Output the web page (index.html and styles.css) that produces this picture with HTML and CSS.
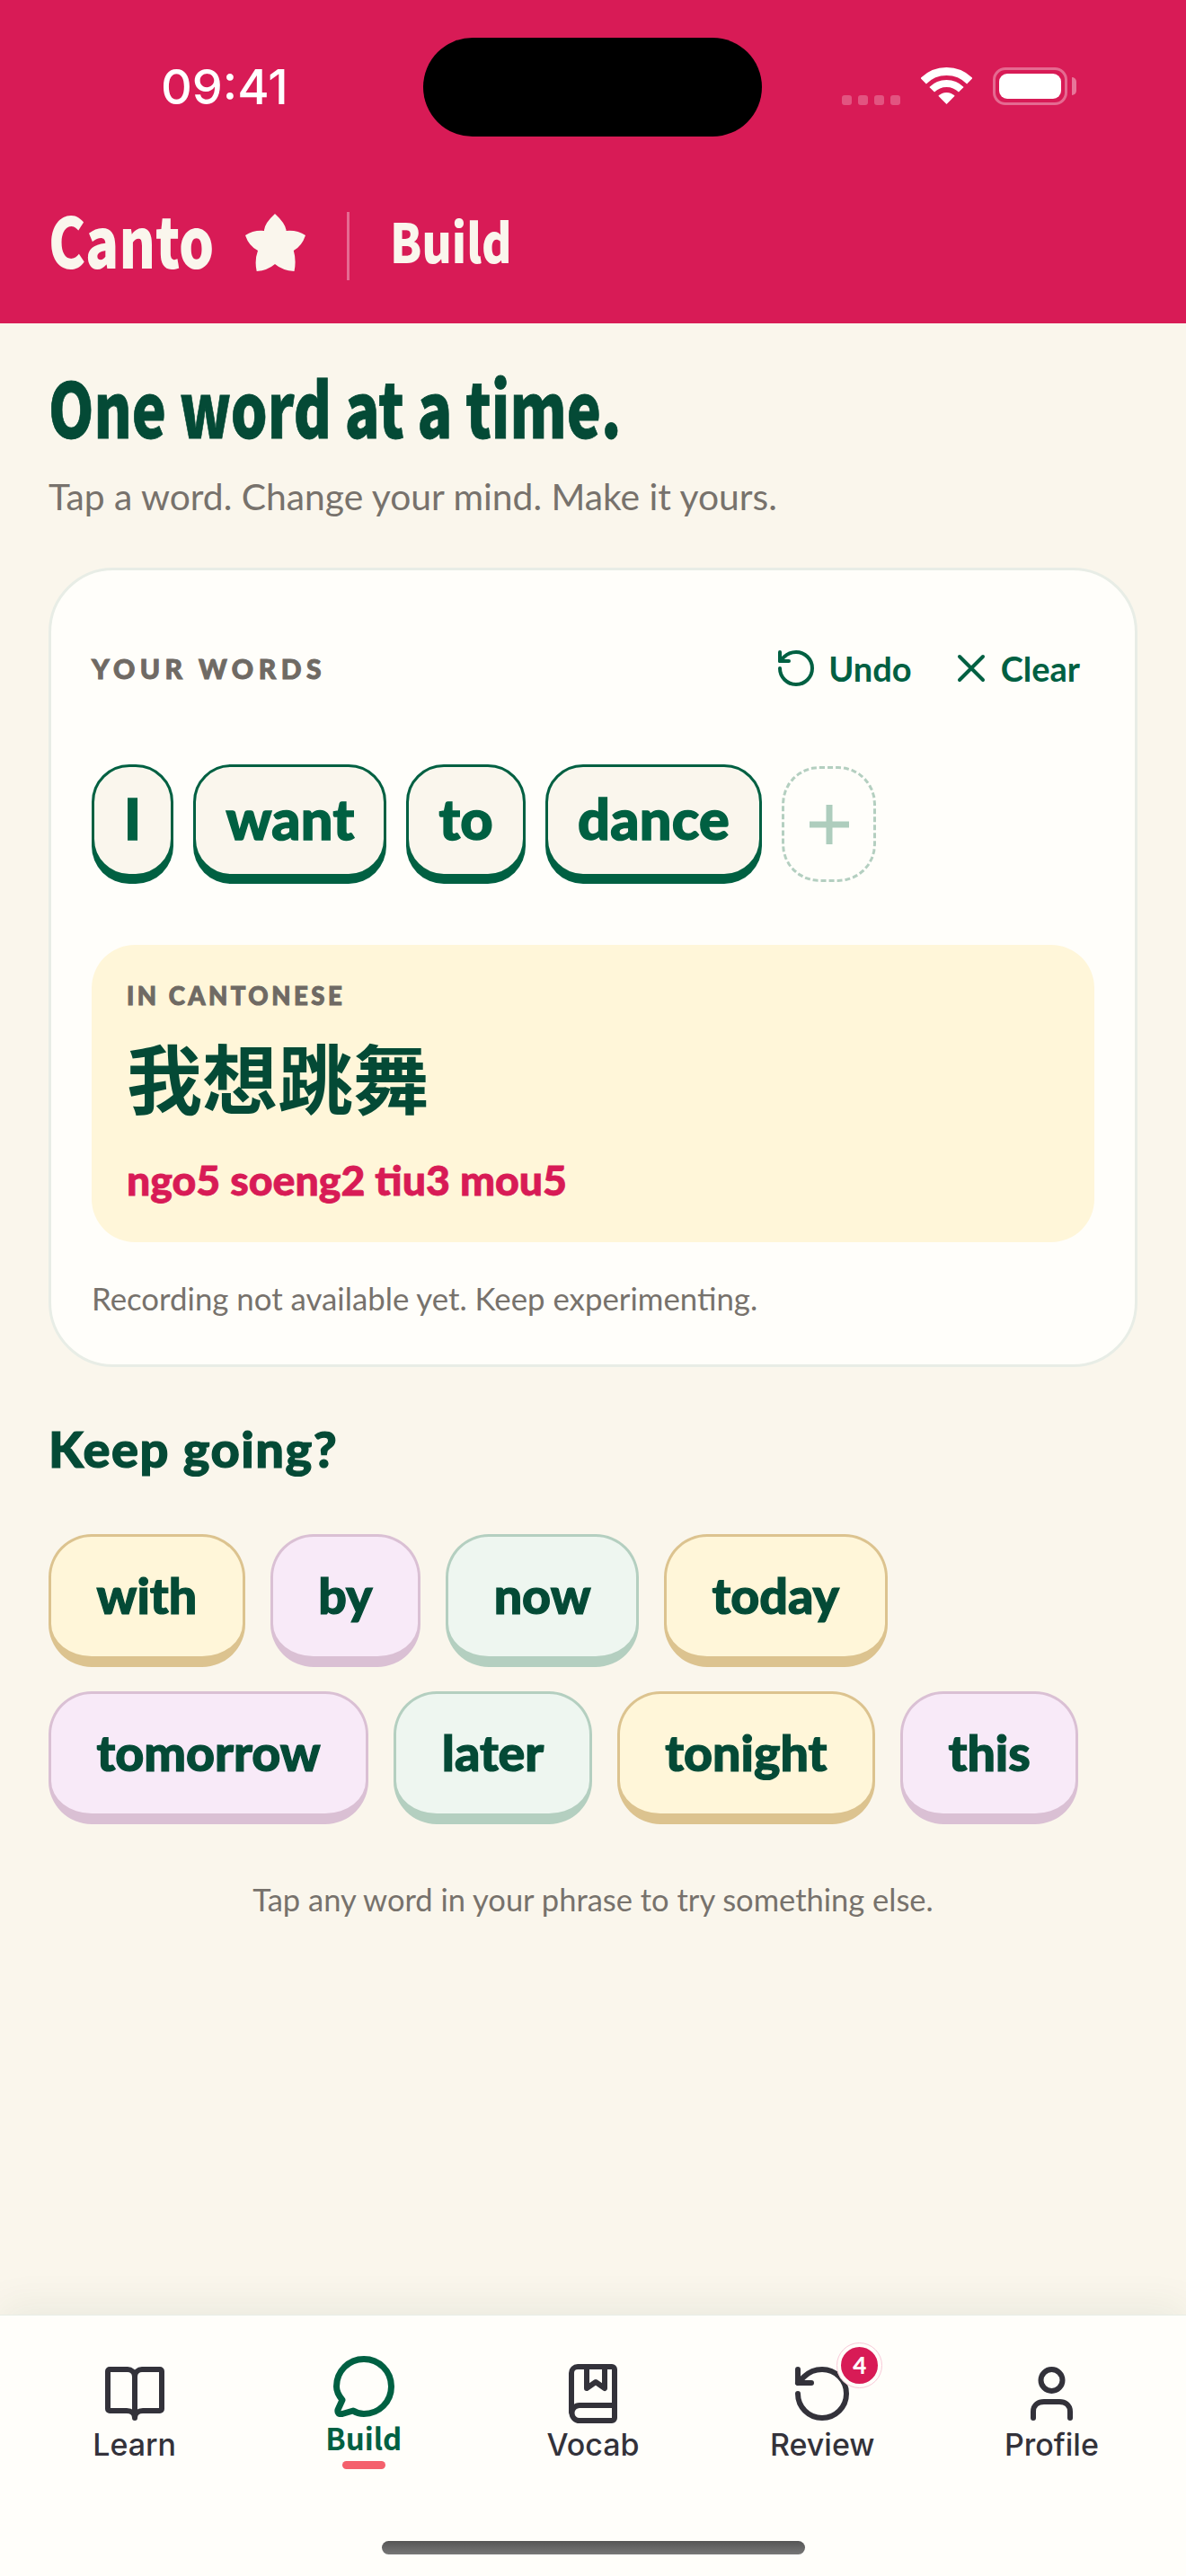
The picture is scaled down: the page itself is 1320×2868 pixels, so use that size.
FILE: index.html
```html
<!DOCTYPE html>
<html lang="en">
<head>
    <meta charset="UTF-8">
    <meta name="viewport" content="width=device-width, initial-scale=1.0">
    <title>Canto - Build</title>
    <link rel="stylesheet" href="styles.css">
</head>
<body>
    <header class="top">
        <div class="status">
            <span class="time">09:41</span>
            <div class="island"></div>
            <div class="status-icons">
                <div class="signal"><i></i><i></i><i></i><i></i></div>
                <svg class="wifi" width="57" height="42" viewBox="0 0 57 42" fill="none" stroke="#fff">
                    <path d="M2.7 15.2a36.5 36.5 0 0 1 51.6 0" stroke-width="9"/>
                    <path d="M12.2 24.7a23 23 0 0 1 32.6 0" stroke-width="8"/>
                    <path d="M28.5 41L19.3 31.8a13 13 0 0 1 18.4 0Z" fill="#fff" stroke="none"/>
                </svg>
                <div class="battery"><div class="battery-fill"></div></div>
                <div class="battery-nub"></div>
            </div>
        </div>
        <div class="brand">
            <span class="brand-name"><span class="squeeze">Canto</span></span>
            <svg class="star" width="67" height="64" viewBox="0 0 67 64">
                <path d="M33 0Q45 11 45.6 19Q58 18 67 24Q63 36 53.8 41Q57 52 54.5 64Q41 63 33 56Q25 63 12.7 64Q10 52 14 41Q4 36 0 24Q9 18 21 19Q21 11 33 0Z" fill="#faf6ed"/>
            </svg>
            <span class="brand-line"></span>
            <span class="brand-page"><span class="squeeze">Build</span></span>
        </div>
    </header>

    <main class="content">
        <h1><span class="squeeze">One word at a time.</span></h1>
        <p class="sub">Tap a word. Change your mind. Make it yours.</p>

        <section class="card">
            <div class="card-head">
                <span class="eyebrow">YOUR WORDS</span>
                <div class="actions">
                    <button class="action">
                        <svg width="48" height="48" viewBox="0 0 24 24" fill="none" stroke="#006042" stroke-width="2" stroke-linecap="round" stroke-linejoin="round">
                            <path d="M3 12a9 9 0 1 0 9-9 9.75 9.75 0 0 0-6.74 2.74L3 8"/>
                            <path d="M3 3v5h5"/>
                        </svg>
                        Undo
                    </button>
                    <button class="action action-clear">
                        <svg width="32" height="32" viewBox="0 0 32 32" fill="none" stroke="#006042" stroke-width="4" stroke-linecap="round">
                            <path d="M3 3L29 29M29 3L3 29"/>
                        </svg>
                        Clear
                    </button>
                </div>
            </div>

            <div class="phrase">
                <span class="word">I</span>
                <span class="word">want</span>
                <span class="word">to</span>
                <span class="word">dance</span>
                <span class="word-add">
                    <svg width="44" height="44" viewBox="0 0 44 44" stroke="#aecdbd" stroke-width="7">
                        <path d="M22 0V44M0 22H44"/>
                    </svg>
                </span>
            </div>

            <div class="answer">
                <span class="eyebrow eyebrow-small">IN CANTONESE</span>
                <div class="hanzi" lang="zh-Hant">我想跳舞</div>
                <div class="jyutping">ngo5 soeng2 tiu3 mou5</div>
            </div>

            <p class="note">Recording not available yet. Keep experimenting.</p>
        </section>

        <h2>Keep going?</h2>
        <div class="options">
            <span class="option yellow">with</span>
            <span class="option pink">by</span>
            <span class="option green">now</span>
            <span class="option yellow">today</span>
            <span class="option pink">tomorrow</span>
            <span class="option green">later</span>
            <span class="option yellow">tonight</span>
            <span class="option pink">this</span>
        </div>
        <p class="hint">Tap any word in your phrase to try something else.</p>
    </main>

    <nav class="tabs">
        <a class="tab">
            <span class="tab-icon">
                <svg width="66" height="60" viewBox="0 0 66 60" fill="none" stroke="#33323a" stroke-width="6" stroke-linecap="round" stroke-linejoin="round">
                    <path d="M33 11C33 6 29 3 25 3H5a2 2 0 0 0-2 2V47a2 2 0 0 0 2 2H24C29 49 33 52 33 57C33 52 37 49 42 49H61a2 2 0 0 0 2-2V5a2 2 0 0 0-2-2H41C37 3 33 6 33 11V57"/>
                </svg>
            </span>
            Learn
        </a>
        <a class="tab tab-active">
            <span class="tab-icon">
                <svg width="68" height="68" viewBox="0 0 68 68" fill="none" stroke="#006042" stroke-width="7" stroke-linejoin="round">
                    <path d="M10 49C5 43 3.5 38 3.5 34C3.5 17 17 3.5 34 3.5S64.5 17 64.5 34S51 64.5 34 64.5C29 64.5 25 63 22 61L10 64.5Q4 65.5 5 60Z"/>
                </svg>
            </span>
            Build
            <span class="tab-mark"></span>
        </a>
        <a class="tab">
            <span class="tab-icon">
                <svg width="54" height="66" viewBox="0 0 54 66" fill="none" stroke="#33323a" stroke-width="6" stroke-linecap="round" stroke-linejoin="round">
                    <path d="M3 54V10a7 7 0 0 1 7-7H48a3 3 0 0 1 3 3V60a3 3 0 0 1-3 3H12a8.500 8.500 0 0 1 0-17H51"/>
                    <path d="M20 3V27L30 20L40 27V3"/>
                </svg>
            </span>
            Vocab
        </a>
        <a class="tab">
            <span class="tab-icon">
                <svg width="72" height="72" viewBox="0 0 24 24" fill="none" stroke="#33323a" stroke-width="2" stroke-linecap="round" stroke-linejoin="round">
                    <path d="M3 12a9 9 0 1 0 9-9 9.75 9.75 0 0 0-6.74 2.74L3 8"/>
                    <path d="M3 3v5h5"/>
                </svg>
                <span class="badge">4</span>
            </span>
            Review
        </a>
        <a class="tab">
            <span class="tab-icon">
                <svg width="47" height="60" viewBox="0 0 47 60" fill="none" stroke="#33323a" stroke-width="6" stroke-linecap="round">
                    <circle cx="23.500" cy="15" r="12"/>
                    <path d="M3 57V50C3 42 9 39 15 39H32C38 39 44 42 44 50V57"/>
                </svg>
            </span>
            Profile
        </a>
        <div class="home-bar"></div>
    </nav>
</body>
</html>
```

FILE: styles.css
```css
* {
    box-sizing: border-box;
}
body {
    margin: 0;
    height: 2868px;
    display: flex;
    flex-direction: column;
    background-color: #faf6ec;
    font-family: Lato, sans-serif;
    overflow: hidden;
}

/* condensed look for the display face */
.squeeze {
    display: inline-block;
    white-space: nowrap;
    transform-origin: left center;
}

/* header */
.top {
    height: 360px;
    background-color: #d81b56;
    flex-shrink: 0;
}
.status {
    position: relative;
    height: 196px;
    display: flex;
    justify-content: space-between;
    padding: 66px 0 0 179px;
}
.time {
    font-family: Inter, sans-serif;
    font-size: 54px;
    font-weight: 500;
    line-height: 62px;
    color: #fff;
}
.island {
    position: absolute;
    left: 471px;
    top: 42px;
    width: 377px;
    height: 110px;
    border-radius: 55px;
    background-color: #000;
}
.status-icons {
    display: flex;
    align-items: flex-end;
    height: 42px;
    margin-top: 9px;
    padding-right: 122px;
}
.signal {
    display: flex;
    gap: 7px;
    margin-right: 23px;
}
.signal i {
    width: 11px;
    height: 11px;
    border-radius: 3px;
    background-color: rgba(255, 255, 255, 0.25);
}
.wifi {
    display: block;
    margin-right: 23px;
}
.battery {
    width: 83px;
    height: 42px;
    padding: 4px;
    border: 3px solid rgba(255, 255, 255, 0.35);
    border-radius: 14px;
}
.battery-fill {
    height: 100%;
    background-color: #fff;
    border-radius: 9px;
}
.battery-nub {
    width: 5px;
    height: 20px;
    margin: 0 0 11px 5px;
    background-color: rgba(255, 255, 255, 0.4);
    border-radius: 0 5px 5px 0;
}
.brand {
    display: flex;
    align-items: center;
    padding-left: 54px;
    height: 76px;
    margin-top: 40px;
    color: #faf6ed;
    font-family: "Noto Sans CJK TC", "Noto Sans", sans-serif;
    font-weight: 900;
}
.brand-name {
    width: 184px;
    font-size: 78px;
    line-height: 76px;
    margin-top: -18px;
}
.brand-name .squeeze {
    transform: scaleX(0.79);
}
.star {
    margin: -8px 0 0 35px;
}
.brand-line {
    width: 3px;
    height: 76px;
    margin: 0 45px 0 46px;
    background-color: rgba(255, 255, 255, 0.35);
}
.brand-page {
    width: 134px;
    font-size: 60px;
    line-height: 76px;
    margin-top: -14px;
}
.brand-page .squeeze {
    transform: scaleX(0.85);
}

/* main column */
.content {
    flex: 1;
    padding: 42px 54px 0;
}
h1 {
    margin: 0;
    font-family: "Noto Sans CJK TC", "Noto Sans", sans-serif;
    font-size: 84px;
    font-weight: 900;
    line-height: 100px;
    color: #044a36;
    -webkit-text-stroke: 0.8px #044a36;
}
h1 .squeeze {
    transform: scaleX(0.765);
}
.sub {
    margin: 23px 0 0;
    font-size: 40.800px;
    line-height: 56px;
    color: #77726c;
}
.card {
    margin-top: 51px;
    height: 890px;
    padding: 85px 45px 0;
    background-color: #fffefa;
    border: 3px solid #e8ede6;
    border-radius: 72px;
}
.card-head {
    display: flex;
    justify-content: space-between;
    align-items: center;
    height: 48px;
}
.eyebrow {
    font-size: 30px;
    font-weight: 900;
    letter-spacing: 5.500px;
    color: #6f6a64;
    -webkit-text-stroke: 1px #6f6a64;
}
.eyebrow-small {
    display: block;
    font-size: 27.500px;
    line-height: 32px;
    letter-spacing: 3.500px;
}
.actions {
    display: flex;
    gap: 50px;
    padding-right: 16px;
}
.action {
    display: flex;
    align-items: center;
    gap: 12px;
    padding: 0;
    border: none;
    background: none;
    font-family: Lato, sans-serif;
    font-size: 38px;
    font-weight: 700;
    color: #006042;
}
.action-clear {
    gap: 17px;
}
.phrase {
    display: flex;
    gap: 22px;
    margin-top: 83px;
}
.word {
    height: 125px;
    padding: 0 33px;
    border: 3px solid #006042;
    border-radius: 42px;
    background-color: #faf6ed;
    box-shadow: 0 8px 0 #006042;
    font-size: 63px;
    font-weight: 900;
    line-height: 114px;
    letter-spacing: 0.300px;
    color: #006042;
    -webkit-text-stroke: 1.500px #006042;
}
.word-add {
    display: flex;
    align-items: center;
    justify-content: center;
    width: 105px;
    height: 129px;
    margin-top: 2px;
    border: 3px dashed #b4cfc0;
    border-radius: 42px;
}
.answer {
    height: 331px;
    margin-top: 70px;
    padding: 41px 39px 0;
    background-color: #fff6d9;
    border-radius: 48px;
}
.hanzi {
    margin-top: 13px;
    font-family: "Noto Sans CJK TC", sans-serif;
    font-size: 84px;
    font-weight: 700;
    line-height: 120px;
    color: #044a36;
}
.jyutping {
    margin-top: 27px;
    font-size: 46.400px;
    font-weight: 900;
    line-height: 56px;
    color: #d81b56;
    -webkit-text-stroke: 0.8px #d81b56;
}
.note {
    margin: 40px 0 0;
    font-size: 34.800px;
    line-height: 46px;
    color: #77726c;
}
h2 {
    margin: 59px 0 0;
    font-size: 56px;
    font-weight: 900;
    line-height: 64px;
    letter-spacing: 1.500px;
    color: #044a36;
    -webkit-text-stroke: 1.200px #044a36;
}
.options {
    display: flex;
    flex-wrap: wrap;
    gap: 27px 28px;
    margin-top: 63px;
}
.option {
    height: 148px;
    padding: 0 50.500px;
    border: 3px solid;
    border-bottom-width: 12px;
    border-radius: 48px;
    font-size: 55.500px;
    font-weight: 900;
    line-height: 130px;
    color: #044a36;
    -webkit-text-stroke: 1.200px #044a36;
}
.yellow {
    background-color: #fff6d9;
    border-color: #dcc38f;
}
.pink {
    background-color: #f8eaf8;
    border-color: #dac0d4;
}
.green {
    background-color: #eef6f0;
    border-color: #b4cfc0;
}
.hint {
    margin: 61px 0 0;
    font-size: 34.500px;
    line-height: 46px;
    text-align: center;
    color: #77726c;
}

/* bottom tabs */
.tabs {
    position: relative;
    flex-shrink: 0;
    display: flex;
    height: 291px;
    padding: 54px 22px 0;
    background-color: #fffefa;
    border-top: 1px solid #e8ede6;
    box-shadow: 0 -12px 40px rgba(0, 60, 40, 0.06);
}
.tab {
    flex: 1;
    display: flex;
    flex-direction: column;
    align-items: center;
    font-family: Inter, sans-serif;
    font-size: 34px;
    font-weight: 500;
    line-height: 46px;
    color: #33323a;
}
.tab-icon {
    position: relative;
    display: flex;
    align-items: center;
    justify-content: center;
    height: 66px;
    margin-bottom: 1px;
}
.tab-active {
    margin-top: -9px;
    font-family: "Noto Sans CJK TC", "Noto Sans", sans-serif;
    font-size: 33px;
    font-weight: 700;
    color: #006042;
}
.tab-active .tab-icon {
    height: 68px;
    margin-bottom: 0;
}
.tab-mark {
    width: 48px;
    height: 9px;
    margin-top: 3px;
    border-radius: 5px;
    background-color: #f4606c;
}
.badge {
    position: absolute;
    left: 52px;
    top: -24px;
    width: 51px;
    height: 51px;
    border-radius: 50%;
    border: 5px solid #fffefa;
    outline: 1px solid #f9c9d8;
    outline-offset: -1px;
    background-color: #d81b56;
    color: #fff;
    font-family: Lato, sans-serif;
    font-size: 26px;
    font-weight: 900;
    line-height: 41px;
    text-align: center;
}
.home-bar {
    position: absolute;
    left: 425px;
    bottom: 24px;
    width: 471px;
    height: 15px;
    border-radius: 8px;
    background: linear-gradient(#555, #777);
}
```
